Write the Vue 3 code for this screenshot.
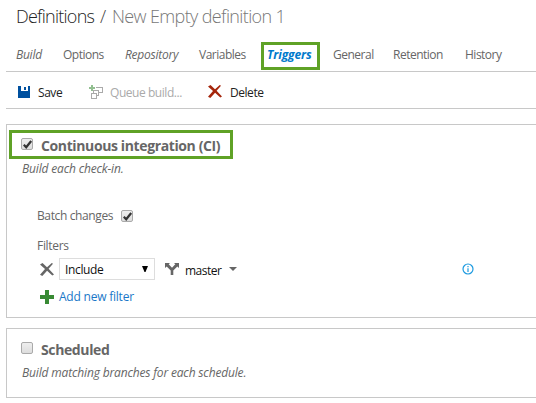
<script setup>
import { ref } from 'vue'

const tabs = [
  { name: 'Build', w: 47, italic: true },
  { name: 'Options', w: 62 },
  { name: 'Repository', w: 74, italic: true },
  { name: 'Variables', w: 61 },
  { name: 'Triggers', w: 59, active: true },
  { name: 'General', w: 60 },
  { name: 'Retention', w: 72 },
  { name: 'History', w: 50 }
]
const ci = ref(true)
const batch = ref(true)
const scheduled = ref(false)
</script>

<template>
  <main class="page">
    <h1 class="title"><span class="root">Definitions</span><span class="slash">/</span><span class="leaf">New Empty definition 1</span></h1>

    <nav class="tabs">
      <a v-for="t in tabs" :key="t.name" class="tab" :class="{ italic: t.italic, active: t.active }" :style="{ width: t.w + 'px' }">{{ t.name }}</a>
    </nav>

    <div class="toolbar">
      <button class="tool save">
        <svg width="12" height="12" viewBox="0 0 12 12" shape-rendering="crispEdges"><path fill="#00509f" d="M0 0h3v5h7V0h1l1 1v11H0z" /><path fill="#00509f" d="M6 1h2v3H6z" /></svg>
        <span>Save</span>
      </button>
      <button class="tool queue">
        <svg width="14" height="14" viewBox="0 0 14 14" fill="none" stroke="#aaa" shape-rendering="crispEdges"><path d="M7 2.500h6.500v5H10M4.500 8V5.500h5v5H8M2.500 8.500h5v5h-5z" /><path stroke="#92bf90" stroke-width="2" d="M3 0v6M0 3h6" /></svg>
        <span>Queue build...</span>
      </button>
      <button class="tool delete">
        <svg width="14" height="13" viewBox="0 0 14 13" fill="#a5260c"><path d="M0 1.500 2.500 0 7 4.300 11.800 0 13 .8 8.600 5.800 14 11.500 12.300 12.600 7.100 7.700 2.300 13 0 11.700 5 6.100z" /></svg>
        <span>Delete</span>
      </button>
    </div>

    <section class="card ci">
      <div class="head marked">
        <button class="check" @click="ci = !ci"><svg v-if="ci" width="11" height="11" viewBox="0 0 11 11"><path d="M1.800 5.800 4.200 8.300 9.200 2" fill="none" stroke="#333" stroke-width="2.200" /></svg></button>
        <h2>Continuous integration (CI)</h2>
      </div>
      <p class="desc d1">Build each check-in.</p>
      <div class="batch">
        <span>Batch changes</span>
        <button class="check" @click="batch = !batch"><svg v-if="batch" width="11" height="11" viewBox="0 0 11 11"><path d="M1.800 5.800 4.200 8.300 9.200 2" fill="none" stroke="#333" stroke-width="2.200" /></svg></button>
      </div>
      <div class="label">Filters</div>
      <div class="filter">
        <svg class="remove" width="14" height="13" viewBox="0 0 14 13" fill="#666"><path d="M0 1.500 2.500 0 7 4.300 11.800 0 13 .8 8.600 5.800 14 11.500 12.300 12.600 7.100 7.700 2.300 13 0 11.700 5 6.100z" /></svg>
        <div class="select"><span>Include</span><svg width="6" height="6" viewBox="0 0 6 6"><path d="M0 0h6L3.500 6h-1z" fill="#000" /></svg></div>
        <svg class="branch" width="14" height="12" viewBox="0 0 14 12"><path fill="#666" d="M0 0h5L3.700 1.300 7 4.800l3.300-3.500L9 0h5v5l-1.700-1.600L8.300 7.500V12H5.700V7.500l-4-4.100L0 5z" /></svg>
        <span class="master">master</span>
        <svg class="caret" width="8" height="4" viewBox="0 0 8 4"><path d="M0 0h8L4 4z" fill="#666" /></svg>
        <svg class="info" width="12" height="12" viewBox="0 0 12 12"><circle cx="6" cy="6" r="5" fill="none" stroke="#1c9ae0" stroke-width="1.200" /><path d="M5.400 3h1.200v1.200H5.400zM5.400 5.200h1.200V9H5.400z" fill="#1c9ae0" /></svg>
      </div>
      <a class="add">
        <svg width="14" height="14" viewBox="0 0 14 14" shape-rendering="crispEdges"><path d="M5 0h4v5h5v4H9v5H5V9H0V5h5z" fill="#388a34" /></svg>
        <span>Add new filter</span>
      </a>
    </section>

    <section class="card scheduled">
      <div class="head">
        <button class="check" @click="scheduled = !scheduled"><svg v-if="scheduled" width="11" height="11" viewBox="0 0 11 11"><path d="M1.800 5.800 4.200 8.300 9.200 2" fill="none" stroke="#333" stroke-width="2.200" /></svg></button>
        <h2>Scheduled</h2>
      </div>
      <p class="desc d2">Build matching branches for each schedule.</p>
    </section>
  </main>
</template>

<style>
body { margin: 0; background: #fff; }
</style>

<style scoped>
* { box-sizing: border-box; }
.page { width: 536px; height: 403px; overflow: hidden; padding-left: 6px; font: 12px/16px "Open Sans", "Noto Sans", sans-serif; color: #666; white-space: nowrap; }
button { border: 0; padding: 0; background: none; font: inherit; color: inherit; }
svg { display: block; flex: none; }
h1, h2, p { margin: 0; }
.title { display: flex; height: 38px; padding: 3px 0 0 10px; font-size: 18px; line-height: 26px; font-weight: 300; color: #222; }
.root { width: 84px; letter-spacing: -.75px; }
.slash { width: 12px; color: #444; }
.leaf { letter-spacing: -.63px; color: #777; }
.tabs { display: flex; height: 34px; padding: 4px 0 0 10px; border-bottom: 1px solid #c8c8c8; }
.tab { flex: none; height: 28px; line-height: 26px; letter-spacing: -.5px; }
.tab.italic { font-style: italic; letter-spacing: -.25px; }
.tab.active { margin: 0 13px 0 1px; padding-left: 3px; border: 3px solid #5fa226; line-height: 20px; color: #007acc; font-weight: 700; font-style: italic; letter-spacing: -.1px; }
.toolbar { display: flex; height: 37px; align-items: center; padding: 3px 0 0 12px; border-bottom: 1px solid #c8c8c8; color: #222; }
.tool { display: flex; align-items: center; gap: 8px; letter-spacing: -.45px; }
.tool span { padding-top: 2px; }
.save { width: 71px; }
.queue { width: 119px; gap: 7px; color: #aaa; }
.card { border: 1px solid #c8c8c8; border-right: 0; }
.ci { height: 194px; margin-top: 15px; padding-top: 5px; }
.scheduled { height: 70px; margin-top: 10px; padding-top: 7px; }
.head { display: flex; height: 29px; padding: 0 0 0 14px; gap: 8px; }
.marked { width: 224px; margin-left: 2px; border: 3px solid #5fa226; padding: 5px 0 0 9px; }
h2 { margin-top: -2px; font-size: 14px; line-height: 20px; font-weight: 700; letter-spacing: -.38px; }
.scheduled .head { padding-top: 6px; }
.check { width: 12px; height: 12px; flex: none; border: 1px solid #aaa; border-radius: 2px; background: linear-gradient(#eee, #ddd); }
.check svg { margin: -.5px; }
.desc { padding-left: 15px; font-style: italic; letter-spacing: -.16px; }
.d1 { padding-top: 2px; }
.batch { display: flex; align-items: center; height: 16px; margin: 31px 0 0 30px; }
.batch span { width: 84px; letter-spacing: -.38px; }
.label { margin: 14px 0 0 30px; letter-spacing: -.3px; }
.filter { display: flex; height: 22px; align-items: center; margin: 4px 0 0 33px; color: #111; letter-spacing: -.35px; }
.select { display: flex; align-items: center; justify-content: space-between; width: 96px; height: 22px; margin: 0 10px 0 5px; padding: 0 6px 0 5px; border: 1px solid #ddd; }
.select span { padding-top: 2px; }
.master { width: 37px; margin-left: 6px; padding-top: 3px; letter-spacing: -.5px; }
.caret { margin-left: 7px; }
.info { margin-left: 225px; }
.add { display: flex; align-items: center; gap: 5px; height: 16px; margin: 9px 0 0 33px; color: #1a78c8; letter-spacing: -.22px; }
</style>
